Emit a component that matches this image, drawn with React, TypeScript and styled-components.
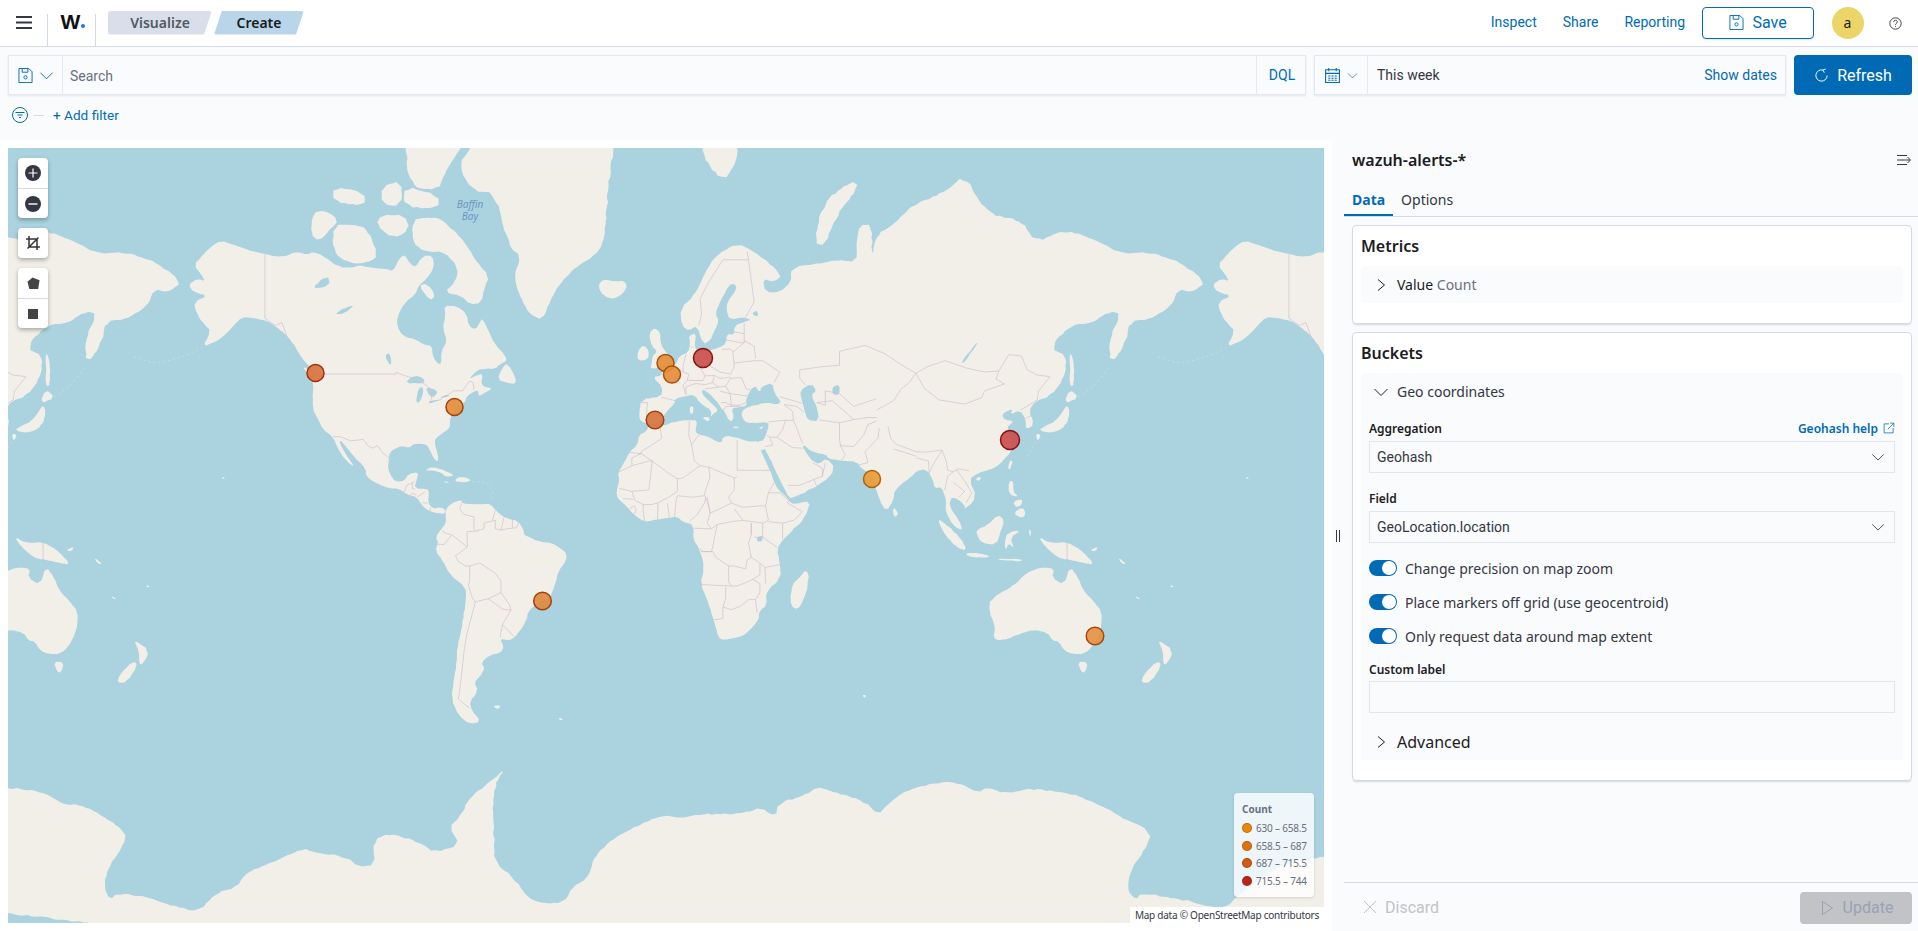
import React from 'react';
import styled, { createGlobalStyle } from 'styled-components';

const BLUE = '#006BB4';
const BORDER = '#D3DAE6';
const PAGE = '#FAFBFD';
const TEXT = '#343741';
const UI = '"Noto Sans", sans-serif';
const PLAIN = 'Roboto, "Liberation Sans", sans-serif';

const GlobalStyle = createGlobalStyle`
  html, body, #root { margin: 0; height: 100%; }
  body { background: #fff; color: ${TEXT}; font-family: ${UI}; font-size: 14px; overflow: hidden; }
  * { box-sizing: border-box; }
`;

/* map data, [lon, lat] */
const LAND: number[][][] = [
  // north america
  [[-168,65.6],[-164.5,66.5],[-162,66.1],[-163.5,67.1],[-166,68.4],[-163,69.5],[-160,70.6],[-156.5,71.3],[-152,70.8],[-146,70.1],[-141,69.7],[-135,69.3],[-130,70],[-126,69.6],[-124,70],[-120,69.4],[-115,68],[-110,68],[-108,68.3],[-104,68],[-98,67.8],[-96,67.5],[-94,69],[-92,69.7],[-90,68.5],[-88,68],[-85.5,69.5],[-82,69.5],[-81.5,68],[-84,66.5],[-87,65.5],[-88,64.2],[-92,62.8],[-94.5,60.5],[-94.5,58.8],[-92.5,57],[-88,56.4],[-85,55.3],[-82.3,55.1],[-82,52.9],[-80,51.2],[-79,51.5],[-79,54],[-77,56],[-78.5,58.7],[-77.5,60.8],[-78,62.4],[-73.5,62.3],[-70,61],[-69.5,59],[-67,58.2],[-65.5,59.5],[-64.5,60.3],[-62,57.5],[-60,55.3],[-57,53.5],[-55.8,52],[-58.5,51.2],[-60,50.2],[-65,50.2],[-67,49.5],[-69.5,47.7],[-65,49.2],[-64.5,48.5],[-65,47],[-64,46],[-61,45.6],[-63.5,44.6],[-66,43.6],[-66,45],[-67,45],[-70,43.7],[-70.8,42],[-74,40.6],[-75.5,38.5],[-76,37],[-76,35],[-78,33.9],[-81,32],[-81.4,30.5],[-80.1,26.8],[-80.2,25],[-80.6,25],[-81.8,26],[-82.8,28],[-84,30],[-86,30.4],[-89,30.3],[-90,29.1],[-93,29.7],[-95,29],[-97.2,27.7],[-97.5,25],[-97.8,22.5],[-96.2,19.3],[-94.5,18.2],[-92,18.6],[-90.5,20.8],[-87,21.5],[-87.6,19],[-88.5,16],[-84,15.8],[-83.3,14.9],[-83.7,11],[-81.8,9],[-79.5,9.6],[-77.5,8.7],[-77.9,7.2],[-80,7.5],[-81.5,7.7],[-83.5,8.4],[-85.7,10],[-87.5,13],[-91,13.9],[-94,16],[-97,15.9],[-101,17.3],[-105.5,20],[-105.5,22.5],[-109,25.7],[-112.5,29.5],[-114.7,31.7],[-114.5,30],[-112,26.5],[-109.5,23],[-112,24.7],[-115,28.2],[-117.1,32.5],[-120.5,34.5],[-122.5,37.8],[-124.3,40.3],[-124,46.3],[-124.7,48.4],[-122.5,48.5],[-125,50.5],[-128,52.5],[-130.3,54.8],[-133,57],[-136.5,58.5],[-140,59.8],[-145,60.3],[-149,60.5],[-152,59],[-154.5,57.5],[-158,56],[-163,54.8],[-160,58],[-162,59],[-165,61],[-166,63],[-161,64],[-166,64.5]],
  // arctic islands
  [[-80,73.7],[-76,72.8],[-71,71.2],[-67,69],[-62,66.8],[-64,65],[-65,62.8],[-69,62.6],[-72,64],[-78,64.5],[-74,66],[-73,68],[-78,70],[-85,70],[-89,71],[-89,73.5],[-85,73.7]],
  [[-117,70],[-112,68.6],[-105,68.6],[-101,69.5],[-105,72.6],[-110,73],[-117,73]],
  [[-125,72],[-122,71.2],[-118,72.5],[-115,73.5],[-120,74.4],[-124,74.2]],
  [[-90,76.5],[-80,76.2],[-78,77.5],[-75,78.5],[-68,80.5],[-62,82],[-70,83],[-80,83],[-90,82],[-92,80]],
  [[-92,74.7],[-80,74.6],[-80,75.8],[-92,76.6]],
  [[-117,75.2],[-106,74.8],[-106,76],[-117,76.5]],
  [[-100,75],[-93,74.8],[-93,77],[-100,76.5]],
  [[-102,73],[-96,71.5],[-90,72.5],[-92,74],[-100,74]],
  [[-87,65.5],[-83,63.2],[-81,64],[-84,65.8]],
  [[-59.3,47.7],[-55.5,46.9],[-53,46.7],[-52.8,48],[-55.7,51.5],[-57.5,50.5]],
  [[-128,50.7],[-125,50],[-123.4,48.4],[-125.5,48.9]],
  [[-85,21.9],[-82,23.2],[-77,21.7],[-74.2,20.2],[-77.7,19.9],[-78.5,21],[-82,22]],
  [[-74.4,18.4],[-73,19.9],[-69.9,19.6],[-68.4,18.6],[-71,18],[-72,18.2]],
  [[-78.3,18.3],[-76.3,18.2],[-77,17.8]],
  // greenland, iceland
  [[-73,78.2],[-68,76.1],[-60,76],[-55,70.5],[-51,69.5],[-53.5,66.8],[-51,63.5],[-48,61],[-43.5,59.9],[-41,63],[-37.5,65.7],[-32,68],[-25,69.5],[-22,71],[-21,74],[-20,77],[-18,80],[-25,83],[-35,83.5],[-50,82.5],[-62,81.5],[-68,79.5]],
  [[-24,65.5],[-22,66.4],[-18,66.1],[-14.5,66.2],[-13.6,65],[-18,63.4],[-22,63.9]],
  // south america
  [[-77.5,8.7],[-75.5,10.8],[-72,12.1],[-71.5,10.8],[-68,10.6],[-64,10.6],[-61.8,10.7],[-60,8.5],[-57,6],[-52,4.8],[-50,1.5],[-50,0],[-48,-1],[-44,-2.6],[-40,-3],[-37,-5],[-35,-6.5],[-35,-9],[-38,-13],[-39,-17.5],[-41,-22],[-44.5,-23],[-48.5,-26],[-49,-29],[-53,-33.8],[-55,-34.9],[-58.5,-34.3],[-57,-36.5],[-58,-38.3],[-62,-39],[-65,-41],[-63.7,-42.5],[-65.3,-44.5],[-67.5,-46],[-66,-48],[-69,-50.5],[-68.3,-52.5],[-65,-54.8],[-69,-55.3],[-73,-53.5],[-75.5,-50],[-74.5,-45],[-73.5,-40],[-73.5,-37],[-71.5,-30],[-70.3,-22],[-70.4,-18.3],[-76,-14],[-78.5,-9],[-81.2,-5.5],[-80,-3],[-81,-1],[-79,2],[-77.3,4],[-77.5,7]],
  // africa
  [[-5.9,35.8],[-1,35.5],[3,36.9],[9.8,37.3],[11,36.9],[10.3,34.3],[11,33.2],[15.3,32.3],[19.5,30.4],[20,32.5],[23,32.7],[29,31],[32.5,31.2],[32.5,30],[34,27],[35.5,24],[37,21],[38,18],[39.5,15.5],[43,12.5],[43.3,11.5],[45,10.5],[51,11.9],[49,6],[45,2],[41,-2],[39,-5],[40,-10.5],[40.5,-15],[35,-20],[35.5,-24],[32.8,-26],[32.5,-29],[28,-33],[25.5,-34],[20,-34.8],[18.4,-34],[17,-29.5],[14.5,-22.5],[12,-17],[13.5,-12],[12.2,-6],[9.5,-1.5],[9.7,3.5],[6,4.3],[4,6.3],[1,5.9],[-4,5.1],[-7.6,4.4],[-11,6.7],[-13.2,9],[-15,11],[-17,12.5],[-17.5,14.7],[-16.3,19],[-17,21],[-15,24],[-13,27.7],[-10,30],[-9.5,33],[-7,34]],
  [[49.3,-12],[50.5,-15.5],[47.5,-24.5],[45,-25.5],[43.5,-22.5],[44.5,-17],[46.5,-15.5]],
  // eurasia
  [[-5.6,36],[-9,37],[-9.5,38.8],[-8.8,43],[-1.7,43.4],[-1.2,46],[-4.7,48.3],[-1.5,48.7],[-1.5,49.7],[1.5,50.1],[3.5,51.3],[4.7,53],[8,53.8],[8.5,56],[8,57],[10.6,57.7],[10,55],[11,54],[14,54],[18.5,54.7],[21,55.5],[21.5,57.5],[24,57.2],[24,59],[28,59.7],[30,60],[27,60.5],[22.5,60],[21.3,61.5],[21.5,63],[25,65],[24,65.8],[22,65.5],[19,63],[17.3,61],[18.7,59.8],[16.5,57.5],[15.7,56.2],[13,55.4],[11,59],[8,58],[5.5,59],[5,62],[10,64],[14,67.5],[18,69.7],[25,71],[31,70],[41,67],[38,66],[34,66.5],[35,64.5],[40,64.5],[44,66],[44,68],[54,68.5],[60,69],[67,68.7],[67,71],[68,73],[72.5,73],[72.5,69],[74,72],[80,73],[87,75],[98,76],[105,77.5],[113,74],[125,73.5],[130,71],[140,72.5],[150,71.5],[160,69.7],[170,70],[178,69],[180,68.8],[190,66],[185,64.5],[180,65],[178,62.5],[170,60],[163,59.8],[162,56],[156,51],[156,57],[160,61],[156,61.5],[150,59.5],[142,59],[135,54.7],[141,53],[140,48],[135,43.5],[130,42.5],[127.5,39.8],[129.5,36],[126.5,34.5],[126.5,37.5],[124.5,40],[121,38.8],[122,40.5],[118,39],[119,37.3],[122.5,37],[119.5,35],[122,31],[121.5,28],[117,23.5],[113,22],[109.5,21],[106.5,19],[109.3,13],[105,8.7],[105,10.5],[100.5,13.5],[99.5,10],[103.5,4],[104.2,1.4],[101,3],[98.3,8],[98.5,12],[97,16.5],[94.5,16],[94,18.5],[91.5,22.5],[88,21.7],[86.5,20],[80.3,15.5],[80,12],[77.5,8],[75,12],[73,19],[72.6,21],[69,22.3],[67,24.8],[61.5,25.2],[57,25.7],[56.5,27],[51,28],[48.5,30],[48,29.5],[50,26.7],[51.5,25],[54,24],[56.3,26],[59.7,22.5],[55,17.5],[45,13],[43.3,12.7],[41,17],[39,21],[35.5,27.5],[34.6,29],[33.5,28],[32.5,30],[32.5,31.2],[34.3,31.3],[36,35],[36,36.8],[30,36.3],[27.3,37],[26.3,39.5],[29,41],[35,42],[41,41.5],[38,44.5],[37.5,47],[33.5,46],[33,44.5],[31,46.5],[28,43],[28.5,41.2],[26,40.8],[23,40.5],[24,38],[22.5,36.5],[19.5,41],[13.5,45.5],[12.3,44.5],[16,41.8],[18.5,40],[16.5,39],[15.7,38],[16,40],[12,41.8],[10,44],[7,43.7],[3.2,43],[3,41.7],[0,39.5],[-2,36.8]],
  // europe islands
  [[-5.5,50],[1.4,51.2],[1.7,52.7],[-1,54.5],[-2,56],[-2,57.7],[-4,58.6],[-6,57.5],[-5,55],[-3,54],[-4.7,53],[-5,51.6]],
  [[-10,52],[-6.3,52.2],[-6,54.2],[-8,55.3],[-10,54]],
  [[12,79],[20,76.8],[25,78.5],[25,80],[15,80]],
  [[52,71],[56,70.7],[60,74],[68,76.5],[65,77],[55,75]],
  [[12.5,38],[15.5,38.2],[15,36.7]],
  [[8.3,41],[9.7,41],[9.5,39],[8.5,39]],
  [[23.5,35.5],[26.2,35.2],[24,34.9]],
  [[32.5,35],[34.5,35.6],[33.5,34.7]],
  // east asia and pacific
  [[142,54],[143.3,52],[143.5,46.5],[142,46],[142,50]],
  [[140,41.6],[145.3,43.3],[141.8,45.4]],
  [[131,34.3],[136,33.5],[140.8,35.7],[142,39.5],[141,41.4],[139.8,40],[137,37],[133,35.5]],
  [[130,33.5],[131.9,33],[130.6,31]],
  [[121,25.2],[122,25],[120.8,22],[120.2,23]],
  [[108.7,19.3],[111,20],[110,18.3]],
  [[80,9.7],[81.8,7.3],[80.5,6],[79.8,7.5]],
  [[120.5,18.5],[122.2,18.4],[122,15],[124,13],[120.5,14]],
  [[122,7.5],[125.5,9.7],[126.5,7],[125,5.7]],
  [[122,11.5],[125.3,12.5],[125,10.2],[123,9.5]],
  [[109,1.5],[113,3.2],[116.7,7],[119,5],[117.7,1],[116,-3.7],[111,-3],[109.5,-0.5]],
  [[95.3,5.6],[98,4],[103.5,-1],[106,-5.8],[102,-4.5],[98,0]],
  [[105.3,-6.5],[110,-6.5],[114.5,-7.8],[110,-8.2],[106,-7.5]],
  [[116,-8.5],[125,-8.5],[125,-9.5],[118,-9]],
  [[119.5,-5.5],[119,-3],[120,0.7],[125,1.5],[121,-1],[122.5,-5],[120.5,-3]],
  [[127.5,2],[128.5,1],[128,-1]],
  [[131,-0.8],[135,-3],[141,-2.6],[146,-5.5],[150.8,-10.5],[147,-10],[143,-9],[138,-8.3],[133,-4]],
  [[149,-5.5],[152,-4.2],[151,-6]],
  [[159,-8],[162,-10.5],[160,-10]],
  [[165,-21],[167,-22.3],[165.5,-21.9]],
  [[177.3,-17.5],[178.7,-18],[177.5,-18.3]],
  // australia, new zealand
  [[114,-22],[122,-18],[126,-14],[130,-12],[133,-11.5],[136.5,-12],[135.7,-15],[140,-17.5],[142,-11],[145,-15],[146.5,-19],[150,-22.5],[153.2,-26],[153,-31],[150.5,-36],[147,-38.7],[143,-38.7],[140,-37.8],[138,-35],[136,-35],[134,-32.5],[129,-31.7],[124,-33],[118,-35],[115,-34.3],[115.8,-31],[113.5,-26]],
  [[144.7,-40.7],[148.3,-40.9],[147.5,-43.5],[146,-43.5]],
  [[172.7,-34.5],[178.5,-37.7],[176,-41.5],[174.8,-41.3],[174.8,-38]],
  [[172.7,-40.5],[174.3,-41.7],[170.5,-46],[167,-46.2],[168,-44]],
  [[-61,-51.5],[-58,-51.3],[-59,-52.3]],
  [[-38,-54],[-36,-54.2],[-37,-54.6]],
  [[69,-49],[70.5,-49],[69.8,-49.8]],
  [[-156,20],[-155,19.5],[-155.8,19]],
];

const WATER: number[][][] = [
  [[47,45],[51,46.8],[53,45],[51,44],[53,41],[53.8,37],[50,37.2],[49,39],[47.8,42.5]],
  [[58.5,46],[61,46.6],[61,44],[58.5,44]],
  [[-125,65],[-119,67],[-118,65.5]],
  [[-117,61],[-109,62.8],[-113,61]],
  [[-99,53],[-96.5,50.5],[-97,53.8]],
  [[-92,46.8],[-85,46.8],[-85,48],[-88.5,48.8]],
  [[-88,42],[-86.5,42],[-85,45.8],[-87,45.8]],
  [[-84.5,46],[-80,45],[-81.7,43.3],[-83.5,44]],
  [[-83.5,41.6],[-79,42.8],[-83,42.5]],
  [[-79.8,43.3],[-76.3,43.5],[-76.5,44.2]],
  [[32,-1],[34,-0.3],[33.8,-2.5],[32,-2.5]],
  [[30,61],[32.5,60.5],[32,61.7]],
  [[103.7,51.7],[105,51.6],[109.7,55.7],[109,55.6]],
];

// island chains, drawn as faint dashes
const CHAINS: number[][][] = [
  [[-163,54.8],[-168,53.3],[-175,52],[-180,51.5],[-187,52.8]],
  [[145,43.5],[150,46],[156,50.5]],
  [[-68,18.3],[-63,18],[-61,15],[-61.5,12]],
  [[127,26.5],[130,31]],
];

const BORDERS: number[][][] = [
  [[-123,49],[-95,49],[-95,49.4],[-89,48],[-84.5,46.5],[-82.5,45.3],[-82.4,43],[-83,42],[-79,42.8],[-79,43.3],[-76.5,44],[-74.7,45],[-71.5,45],[-70,46.5],[-69,47.4],[-67.8,47],[-67.5,45.2]],
  [[-141,69.7],[-141,60.3],[-137.5,59],[-135,59.5],[-133,56.5],[-130.3,55]],
  [[-117.1,32.5],[-114.7,32.5],[-111,31.3],[-108,31.5],[-106.5,31.7],[-104.5,29.5],[-103,29],[-101.5,29.8],[-99.5,27.5],[-97.2,25.9]],
  [[-92.2,14.5],[-91,17.2],[-89.2,17.8],[-88.3,18.5]],[[-89.2,17.8],[-89.2,15.9],[-88.3,15.7]],[[-90,13.7],[-89.2,14.4],[-87.7,13.8]],[[-87.5,13],[-84.5,15]],[[-85.7,11.1],[-83.7,11]],[[-83,8.3],[-82.7,9.5]],
  [[-71.5,11.8],[-72.5,9],[-71,7],[-67.5,6.2],[-67.5,2],[-66.9,1.2]],
  [[-51.7,4.2],[-52.5,2.4],[-56,2],[-58,1.5],[-60,2],[-60,5],[-64,4],[-64,2],[-67,1.2],[-70,1],[-69.8,-4.3],[-74,-7.5],[-73,-9.5],[-70.5,-11],[-69,-11],[-65.5,-10],[-60,-13.5],[-58,-16.2],[-58,-20],[-55,-24],[-54.5,-25.7],[-57.5,-30.2],[-53.5,-33.7]],
  [[-57,6],[-58,1.5]],[[-54,5.7],[-54,2.3]],[[-60,8.5],[-61,5]],
  [[-80.3,-3.4],[-78,-3.5],[-75.3,-0.1],[-77.5,0.5],[-78.8,1.4]],[[-75.3,-0.1],[-70,-4.3]],
  [[-69,-11],[-69,-16],[-69.5,-17.5]],[[-69.5,-17.5],[-68,-22],[-67,-23]],[[-58,-20],[-62.5,-22]],[[-67,-23],[-62.5,-22]],[[-62.5,-22],[-57.6,-25.3],[-54.5,-25.7]],[[-67,-23],[-70,-33],[-71,-38],[-72,-45],[-73,-50],[-69,-52]],[[-57.5,-30.2],[-58.4,-34]],
  // africa
  [[-2,35],[-1.5,32],[-5,30],[-8.7,28],[-8.7,27.3],[-13,27.7]],[[-8.7,27.3],[-12,26],[-12,23.5],[-17,21.3]],[[-12,23.5],[-6,25],[-4.8,25],[-6,15.5],[-12,15],[-16.5,16]],[[-8.7,27.3],[-4.8,25],[1,21],[4,19.2],[6,19.5],[12,23.5]],[[9,30],[10,25],[12,23.5]],[[8.2,37],[8,33],[9,30],[11.5,33]],[[25,31.5],[25,22]],[[25,22],[36.9,22]],[[12,23.5],[15,23],[24,19.5],[25,20]],[[15,23],[15.5,20],[13.5,14],[15,10],[15.5,7.5],[19,9],[23,11],[22,13],[24,15.5],[24,19.5]],[[24,9],[27,5],[34,4],[36,5],[35,10],[36,14.5],[38,18]],[[23,11],[27,9.5],[33,10],[35,10]],[[36,14.5],[40,14.5],[43,12],[42.7,11],[48,8],[45,5],[41,4],[36,4.5]],[[41,4],[41,-1.7]],[[34,-1],[37.7,-3.5],[39.2,-4.7]],[[31,-1],[34,-1],[34,4]],[[30,4],[30,0]],[[-12,15],[-11,12],[-8,10.5],[-5,10.5],[-3,11],[1,13],[4,15],[4,19.2]],[[3.5,11.7],[4,13.5],[9,13],[13.5,13.5]],[[8.5,4.8],[11,7],[13.5,11],[14,13]],[[3,6.3],[3.5,11.7]],[[1.2,6],[0.5,11]],[[-3,5.1],[-2.8,11]],[[-7.5,4.4],[-8,8],[-8,10.5]],[[-11.3,7],[-10.5,8.5],[-11,10]],[[-15,12.5],[-11.5,12.3]],[[-13,9],[-11,10]],[[14.5,13],[15.5,7.5],[14.5,4],[16,2]],[[9.7,2.2],[16,2],[18,3.5],[23,4.5],[27,5]],[[12,-5],[13,-6],[16,-6],[16.5,-4],[18,3.5]],[[12.2,-6],[16.5,-6],[17.5,-8],[22,-11],[24,-11],[28,-12],[28.5,-9],[30,-8],[29,-3],[30,0],[30,4]],[[11.8,-17.3],[23,-17.8],[25,-17.8]],[[22,-11],[22,-13],[22,-16.5],[23,-17.8]],[[25,-17.8],[28.5,-16.5],[30.5,-15.6],[33,-14],[33,-10],[30,-8]],[[21,-18.3],[21,-22],[20,-24.7],[20,-28.3],[17,-28.7]],[[20,-24.7],[23,-25.5],[26,-24.5],[29.3,-22.2]],[[29.3,-22.2],[31.5,-22.3],[33,-20],[33,-17],[30.5,-15.6]],[[31.5,-22.3],[32,-26.5]],[[34.8,-11.5],[40.5,-10.5]],[[33,-10],[34.8,-11.5],[35,-17]],
  // europe
  [[-1.7,43.4],[3.2,42.5]],[[-8.8,42],[-6.5,42],[-7,37.2]],[[2.5,51],[6,49.5],[8,49],[7.5,47.6],[6,46.3],[7,44]],[[7,53.3],[6,51],[6,49.5]],[[8.7,54.9],[9.7,54.8]],[[14.2,53.9],[15,51],[12.2,50.3],[13.7,48.6],[13,47.5],[10,47.5],[7.5,47.6]],[[7,44],[7,46],[10.5,46.8],[13.7,46.5]],[[13.7,48.6],[17,48.7],[16.3,47],[13.7,46.5]],[[15,51],[19,49.5],[22.7,49],[24,50.7],[23.5,54],[22.7,54.4],[19.7,54.4]],[[17,48.7],[19,48],[22.7,48.3]],[[16.3,47],[18.7,45.9],[21,46.2],[22.7,48]],[[22.7,48],[26.5,48.2],[28.2,45.5],[29.7,45.2]],[[21,46.2],[22.5,44.3],[28.5,43.7]],[[13.7,45.5],[18.7,45.9]],[[19,44.9],[22.5,44.3]],[[22.5,44.3],[23,41.3],[26.3,41.4],[28,42]],[[19.3,42],[21,42],[23,41.3]],[[20,39.7],[21,41],[26.3,41]],[[40,49.5],[34,52],[31,52],[24,51.5]],[[38,47],[40,49.5]],[[23.5,53.8],[28,56],[31,55],[31.5,52.5]],[[21,56.3],[26.5,55.7],[28,56]],[[24,57.8],[27.5,57.5]],[[27.5,59.4],[27.5,56]],[[28,60.5],[31,63],[29,69],[28.5,70]],[[11.5,59],[12.5,61],[12,63.5],[15,66],[20,69],[25,69],[29,69]],
  // middle east and asia
  [[36,36.8],[42,37.2],[44.8,37.2]],[[41.5,41.5],[44.5,39.7],[44.8,37.2]],[[44.8,37.2],[46,35],[48,30.4]],[[42,37.2],[41,34.5],[39,32.3],[36.5,32.3],[35.5,33]],[[39,32.3],[44.5,29.2],[48,29]],[[43,17],[47,17],[52,19],[55,20],[55,22.7],[51.5,24.5]],[[52,19],[53,16.7]],[[55,20],[56,24.5]],[[36.5,32.3],[37.5,30],[35,29.5]],[[61,36.5],[61,31.5],[61.5,29.5],[63,27],[61.7,25.2]],[[61,29.8],[66,29.5],[69.5,33],[71,36],[74,37]],[[68,23.8],[71,24.5],[70,28],[74.5,32],[75,35]],[[78,35.5],[79,32],[81,30.2],[88,27.9],[92,27.8],[97,28.5]],[[80,28.8],[88,26.5]],[[88,26],[92.3,25],[92.5,21]],[[97,28.3],[94,24],[92.5,21]],[[97,28.5],[98.5,25],[99,22],[101,21.5]],[[101,21.5],[103,22.5],[106.6,21.8]],[[102,22.4],[105,18.5],[107.5,14.5],[105.5,11]],[[98,15.5],[99,20],[101,21.5]],[[101,18],[105,15],[103,13]],[[124.5,40],[128,41.5],[130.5,42.7]],[[126.5,37.8],[128.5,38.5]],[[130.5,42.7],[131,45],[135,48.4],[130.5,48.8],[127,50],[125,53],[120.5,53.3],[117,49.7]],[[117,49.7],[112,49.5],[106,50.3],[98,52],[92,50.7],[87.8,49.2],[91,45.5],[96,42.7],[105,41.6],[111,43.3],[112,45],[119,46.7],[116,47.8],[117,49.7]],[[87.8,49.2],[85.5,47],[82.5,45.3],[80,42.5],[74,40]],[[87.8,49.2],[83,51],[77,53.5],[70,55.2],[61,54],[61,51],[55,50.7],[47,50],[47,48],[49,46.5]],[[53,42],[56,41.3],[56,45],[61,44.3],[66,41],[70,42],[74,43]],[[53,42],[58.5,42.5],[66,37.4]],[[54,37.3],[61,36.5],[66,37.4],[71,38],[74,38]],[[40,43.5],[48,41.8]],[[41.5,41.5],[46,41],[48.5,39.5]],
  [[141,-2.6],[141,-9]],
];

// antarctic coast, traced in page pixels
const ANTARCTICA: number[][] = [[-20,790],[13,788],[43,792],[65,805],[78,804],[98,813],[126,832],[124,845],[108,867],[104,887],[110,900],[117,893],[147,897],[173,906],[199,912],[217,892],[236,888],[247,872],[277,860],[304,848],[312,852],[347,857],[358,867],[375,865],[373,840],[390,833],[421,843],[434,853],[460,845],[449,827],[460,817],[470,797],[490,782],[506,768],[493,787],[494,837],[494,862],[516,880],[527,897],[540,903],[564,903],[572,887],[588,878],[594,857],[611,840],[633,828],[663,815],[680,818],[706,814],[747,813],[760,807],[776,817],[778,803],[806,795],[817,787],[828,790],[865,801],[878,815],[887,805],[905,791],[937,782],[960,783],[978,793],[987,787],[1005,794],[1032,788],[1073,794],[1100,805],[1123,818],[1152,832],[1145,850],[1132,867],[1127,890],[1136,900],[1141,893],[1186,900],[1209,907],[1227,907],[1236,897],[1272,870],[1299,860],[1350,855],[1350,950],[-20,950]];

const project = ([lon, lat]: number[]) => {
  const y = Math.log(Math.tan(Math.PI / 4 + (lat * Math.PI) / 360));
  return [666 + lon * 2.8444, 534.5 - y * 163];
};

// one corner-cutting pass, so the coast doesn't look like straight ruler lines
const cutCorners = (pts: number[][]) =>
  pts.flatMap((p, i) => {
    const q = pts[(i + 1) % pts.length];
    return [
      [p[0] * 0.75 + q[0] * 0.25, p[1] * 0.75 + q[1] * 0.25],
      [p[0] * 0.25 + q[0] * 0.75, p[1] * 0.25 + q[1] * 0.75],
    ];
  });

let seed = 7;
const jitter = () => {
  seed = (seed * 16807) % 2147483647;
  return (seed / 2147483647) * 2 - 1;
};

// breaks long edges up with a small fixed wobble, like a real coastline at this zoom
const roughen = (pts: number[][]) =>
  pts.flatMap((p, i) => {
    const q = pts[(i + 1) % pts.length];
    const dx = q[0] - p[0];
    const dy = q[1] - p[1];
    const len = Math.hypot(dx, dy);
    const steps = Math.max(1, Math.round(len / 4));
    const out: number[][] = [p];
    for (let j = 1; j < steps; j += 1) {
      const t = j / steps;
      const off = jitter() * Math.min(1, len * 0.05);
      out.push([p[0] + dx * t - (dy / len) * off, p[1] + dy * t + (dx / len) * off]);
    }
    return out;
  });

const line = (pts: number[][]) => `M${pts.map((p) => `${p[0].toFixed(1)} ${p[1].toFixed(1)}`).join('L')}`;
const coast = (pts: number[][]) => `${line(roughen(cutCorners(pts)))}Z`;

const LAND_PATH = LAND.map((r) => coast(r.map(project))).join('');
const WATER_PATH = WATER.map((r) => coast(r.map(project))).join('');
const BORDER_PATH = BORDERS.map((r) => line(r.map(project))).join('');
const CHAIN_PATH = CHAINS.map((r) => line(r.map(project))).join('');
const ANTARCTIC_PATH = coast(ANTARCTICA);

const MARKERS = [
  { x: 315.5, y: 373, r: 8.5, fill: '#d9743f', line: '#a3300c' },
  { x: 454.5, y: 407, r: 8.5, fill: '#e58e3a', line: '#a8400a' },
  { x: 665.5, y: 363, r: 8.5, fill: '#e58e3a', line: '#a8500a' },
  { x: 672, y: 374.5, r: 8.5, fill: '#e58e3a', line: '#a8500a' },
  { x: 703, y: 358, r: 9.5, fill: '#c9504c', line: '#8e0f10' },
  { x: 655, y: 420, r: 8.8, fill: '#d9743f', line: '#a3400c' },
  { x: 1010, y: 440, r: 9.5, fill: '#c9504c', line: '#8e0f10' },
  { x: 872, y: 479, r: 8.5, fill: '#ea9c35', line: '#ad620b' },
  { x: 542.5, y: 601, r: 8.8, fill: '#e08a40', line: '#a3400c' },
  { x: 1095, y: 636, r: 8.8, fill: '#e59244', line: '#a8450c' },
];

const RANGES = [
  { label: '630 – 658.5', color: '#e8890c' },
  { label: '658.5 – 687', color: '#de7410' },
  { label: '687 – 715.5', color: '#d05a16' },
  { label: '715.5 – 744', color: '#b92419' },
];

const Page = styled.div`
  height: 100vh;
  display: flex;
  flex-direction: column;
`;

const Header = styled.header`
  height: 47px;
  flex: none;
  display: flex;
  align-items: stretch;
  background: #fff;
  border-bottom: 1px solid ${BORDER};
`;

const HeaderCell = styled.div<{ $w: number; $line?: boolean }>`
  width: ${(p) => p.$w}px;
  flex: none;
  display: flex;
  align-items: center;
  justify-content: center;
  position: relative;
  ${(p) =>
    p.$line &&
    `&::after { content: ''; position: absolute; right: 0; top: 14px; bottom: 0; width: 1px; background: ${BORDER}; }`}
`;

const Logo = styled.span`
  display: flex;
  align-items: flex-end;
  gap: 1px;
  font-family: "Liberation Sans", sans-serif;
  font-weight: 700;
  font-size: 21px;
  line-height: 15px;
  color: #111;
  margin: -3px 0 0 2px;
  i { width: 4px; height: 4px; margin-bottom: 1px; border-radius: 50%; background: #0a7cff; }
`;

const Crumbs = styled.nav`
  display: flex;
  align-items: center;
  margin-left: 12px;
  gap: 2px;
  padding-bottom: 1px;
`;

const Crumb = styled.span<{ $active?: boolean }>`
  height: 24px;
  width: ${(p) => (p.$active ? 90 : 104)}px;
  display: flex;
  align-items: center;
  justify-content: center;
  font-size: 14px;
  font-weight: 600;
  color: ${(p) => (p.$active ? '#1a1c21' : '#535966')};
  background: ${(p) => (p.$active ? '#b9d5ea' : '#d9dfea')};
  border-radius: 3px;
  clip-path: ${(p) =>
    p.$active
      ? 'polygon(8px 0, 100% 0, calc(100% - 8px) 100%, 0 100%)'
      : 'polygon(0 0, 100% 0, calc(100% - 8px) 100%, 0 100%)'};
`;

const HeaderRight = styled.div`
  margin-left: auto;
  display: flex;
  align-items: center;
`;

const NavLink = styled.a`
  font-family: ${PLAIN};
  font-size: 14px;
  color: ${BLUE};
  margin-right: 26px;
  padding-bottom: 3px;
`;

const SaveButton = styled.button`
  width: 112px;
  height: 32px;
  margin: 0 8px 1px -9px;
  display: flex;
  align-items: center;
  justify-content: center;
  gap: 8px;
  font-family: ${PLAIN};
  font-size: 16px;
  color: ${BLUE};
  background: #fff;
  border: 1px solid ${BLUE};
  border-radius: 4px;
  box-shadow: 0 2px 2px -1px rgba(152, 162, 179, 0.3);
`;

const Avatar = styled.span`
  width: 32px;
  height: 32px;
  border-radius: 50%;
  background: #ecd568;
  color: #1a1c21;
  display: flex;
  align-items: center;
  justify-content: center;
  font-size: 14px;
  margin-bottom: 1px;
`;

const Query = styled.section`
  height: 93px;
  flex: none;
  background: ${PAGE};
  padding: 8px 6px 0 8px;
`;

const QueryRow = styled.div`
  display: flex;
  height: 40px;
  gap: 8px;
`;

const Field = styled.div<{ $w?: number }>`
  ${(p) => (p.$w ? `width: ${p.$w}px; flex: none;` : 'flex: 1;')}
  display: flex;
  align-items: stretch;
  background: ${PAGE};
  border: 1px solid #e4e8ef;
  box-shadow: 0 1px 2px rgba(152, 162, 179, 0.25);
`;

const Prepend = styled.div<{ $w: number }>`
  width: ${(p) => p.$w}px;
  flex: none;
  display: flex;
  align-items: center;
  justify-content: center;
  gap: 6px;
  border-right: 1px solid #e4e8ef;
`;

const SearchText = styled.span`
  flex: 1;
  display: flex;
  align-items: center;
  padding: 1px 0 0 7px;
  font-family: ${PLAIN};
  font-size: 14px;
  color: #69707d;
`;

const Dql = styled.span`
  width: 49px;
  padding-left: 2px;
  border-left: 1px solid #e4e8ef;
  display: flex;
  align-items: center;
  justify-content: center;
  font-family: ${PLAIN};
  font-size: 14px;
  color: ${BLUE};
`;

const DateText = styled.span`
  flex: 1;
  display: flex;
  align-items: center;
  justify-content: space-between;
  padding: 0 8px 0 9px;
  font-family: ${PLAIN};
  font-size: 14px;
  color: ${TEXT};
  em { font-style: normal; color: ${BLUE}; }
`;

const RefreshButton = styled.button`
  width: 118px;
  flex: none;
  display: flex;
  align-items: center;
  justify-content: center;
  gap: 8px;
  font-family: ${PLAIN};
  font-size: 16px;
  color: #fff;
  background: ${BLUE};
  border: none;
  border-radius: 4px;
`;

const FilterRow = styled.div`
  display: flex;
  align-items: center;
  height: 24px;
  margin-top: 8px;
  padding-left: 4px;
  font-family: ${PLAIN};
  font-size: 13.6px;
  color: ${BLUE};
`;

const Dash = styled.span`
  width: 10px;
  height: 1px;
  background: ${BORDER};
  margin: 0 9px 0 6px;
`;

const Content = styled.main`
  flex: 1;
  min-height: 0;
  display: flex;
`;

const MapColumn = styled.div`
  width: 1332px;
  flex: none;
  padding: 8px;
  display: flex;
`;

const MapFrame = styled.div`
  flex: 1;
  position: relative;
  overflow: hidden;
  background: #aad3df;
`;

const MapSvg = styled.svg`
  display: block;
  width: 100%;
  height: 100%;
`;

const Controls = styled.div`
  position: absolute;
  left: 10px;
  top: 10px;
  display: flex;
  flex-direction: column;
  gap: 10px;
`;

const ControlGroup = styled.div`
  width: 30px;
  background: #fff;
  border-radius: 4px;
  box-shadow: 0 2px 4px rgba(0, 0, 0, 0.3);
  display: flex;
  flex-direction: column;
`;

const ControlButton = styled.div`
  height: 30px;
  display: flex;
  align-items: center;
  justify-content: center;
  & + & { border-top: 1px solid ${BORDER}; }
`;

const Legend = styled.div`
  position: absolute;
  right: 10px;
  bottom: 26px;
  width: 80px;
  height: 104px;
  padding: 9px 8px;
  background: rgba(255, 255, 255, 0.8);
  border-radius: 4px;
  box-shadow: 0 1px 3px rgba(0, 0, 0, 0.12);
  font-size: 10px;
  color: #69707d;
`;

const LegendTitle = styled.div`
  font-weight: 700;
  font-size: 10px;
  line-height: 14px;
  margin-bottom: 3px;
`;

const LegendRow = styled.div`
  display: flex;
  align-items: center;
  gap: 4px;
  height: 17.7px;
  white-space: nowrap;
  font-size: 10px;
  letter-spacing: -0.2px;
`;

const LegendDot = styled.i<{ $color: string }>`
  width: 10px;
  height: 10px;
  flex: none;
  border-radius: 50%;
  background: ${(p) => p.$color};
  border: 1px solid rgba(120, 40, 0, 0.35);
`;

const Attribution = styled.div`
  position: absolute;
  right: 0;
  bottom: 0;
  height: 16px;
  padding: 0 5px;
  background: #fff;
  font-size: 10px;
  letter-spacing: -0.25px;
  line-height: 16px;
  color: ${TEXT};
  white-space: nowrap;
`;

const Panel = styled.aside`
  flex: 1;
  min-width: 0;
  position: relative;
  display: flex;
  flex-direction: column;
  background: ${PAGE};
`;

const Handle = styled.span`
  position: absolute;
  left: 4px;
  top: 390px;
  width: 4px;
  height: 12px;
  border-left: 1px solid ${TEXT};
  border-right: 1px solid ${TEXT};
`;

const PanelTitle = styled.div`
  display: flex;
  align-items: center;
  justify-content: space-between;
  height: 40px;
  padding: 0 6px 0 20px;
  font-size: 16px;
  font-weight: 600;
  color: #1a1c21;
`;

const Tabs = styled.div`
  display: flex;
  height: 37px;
  margin: 0 0 0 12px;
  padding-top: 3px;
  border-bottom: 1px solid ${BORDER};
`;

const Tab = styled.span<{ $active?: boolean }>`
  padding: 0 8px;
  height: 33px;
  display: flex;
  align-items: center;
  font-size: 14px;
  font-weight: ${(p) => (p.$active ? 700 : 400)};
  color: ${(p) => (p.$active ? BLUE : TEXT)};
  box-shadow: ${(p) => (p.$active ? `inset 0 -2px 0 ${BLUE}` : 'none')};
`;

const PanelBody = styled.div`
  flex: 1;
  min-height: 0;
  padding: 8px 6px 0 20px;
  display: flex;
  flex-direction: column;
  gap: 8px;
`;

const Card = styled.section`
  background: #fff;
  border: 1px solid ${BORDER};
  border-radius: 4px;
  box-shadow: 0 2px 2px -1px rgba(152, 162, 179, 0.4);
  padding: 8px 8px 20px;
`;

const CardTitle = styled.h3`
  margin: 0 0 8px;
  height: 24px;
  line-height: 24px;
  font-size: 16px;
  font-weight: 600;
  color: #1a1c21;
`;

const Group = styled.div`
  background: ${PAGE};
  border-radius: 4px;
`;

const GroupHead = styled.div<{ $big?: boolean }>`
  height: 37px;
  display: flex;
  align-items: center;
  gap: 8px;
  padding-left: 12px;
  font-size: ${(p) => (p.$big ? 16 : 14)}px;
  color: ${(p) => (p.$big ? '#1a1c21' : TEXT)};
  span { color: #69707d; }
  b { font-weight: 400; color: #1a1c21; }
`;

const Form = styled.div`
  padding: 9px 8px 10px;
`;

const LabelRow = styled.div<{ $mb?: number }>`
  display: flex;
  justify-content: space-between;
  align-items: center;
  height: 18px;
  margin-bottom: ${(p) => p.$mb ?? 4}px;
  font-size: 12px;
  font-weight: 600;
  color: #1a1c21;
  a { color: ${BLUE}; display: flex; align-items: center; gap: 5px; }
`;

const Select = styled.div<{ $mb?: number }>`
  height: 32px;
  padding: 0 9px 0 7px;
  margin-bottom: ${(p) => p.$mb ?? 0}px;
  display: flex;
  align-items: center;
  justify-content: space-between;
  background: ${PAGE};
  border: 1px solid #e1e5ec;
  font-family: ${PLAIN};
  font-size: 14px;
  color: ${TEXT};
`;

const SwitchRow = styled.div<{ $mb?: number }>`
  height: 16px;
  margin-bottom: ${(p) => p.$mb ?? 18}px;
  display: flex;
  align-items: center;
  gap: 8px;
  font-size: 14px;
  color: ${TEXT};
`;

const Switch = styled.span`
  width: 28px;
  height: 16px;
  flex: none;
  position: relative;
  border-radius: 8px;
  background: ${BLUE};
  &::after {
    content: '';
    position: absolute;
    right: 1px;
    top: 1px;
    width: 14px;
    height: 14px;
    border-radius: 50%;
    background: #fff;
  }
`;

const Footer = styled.footer`
  height: 49px;
  flex: none;
  margin-left: 12px;
  padding: 0 6px 0 18px;
  border-top: 1px solid ${BORDER};
  display: flex;
  align-items: center;
  justify-content: space-between;
`;

const Discard = styled.span`
  display: flex;
  align-items: center;
  gap: 7px;
  font-family: ${PLAIN};
  font-size: 16px;
  color: #c2c3c6;
`;

const UpdateButton = styled.button`
  width: 112px;
  height: 32px;
  margin-top: 1px;
  display: flex;
  align-items: center;
  justify-content: center;
  gap: 8px;
  font-family: ${PLAIN};
  font-size: 16px;
  color: #98a2b3;
  background: #c2c3c6;
  border: none;
  border-radius: 4px;
`;

const Ico = ({ size = 16, color = 'currentColor', children }: { size?: number; color?: string; children: React.ReactNode }) => (
  <svg width={size} height={size} viewBox="0 0 16 16" fill="none" stroke={color} strokeWidth={1}>
    {children}
  </svg>
);

const ChevronDown = ({ color = TEXT, size = 14 }: { color?: string; size?: number }) => (
  <Ico size={size} color={color}><path d="M1.5 5 8 11.5 14.5 5" /></Ico>
);
const ChevronRight = () => (
  <Ico size={16} color="#1a1c21"><path d="M5 2.5 11.5 8 5 13.5" /></Ico>
);
const SaveIcon = ({ color = BLUE }: { color?: string }) => (
  <Ico size={15} color={color}>
    <path d="M1 .5h10.5l3.500 3.500v11.500H1zM4.500 .5v4h6v-4" />
    <circle cx="8" cy="10" r="1.7" />
  </Ico>
);

const App = () => (
  <Page>
    <GlobalStyle />
    <Header>
      <HeaderCell $w={48} $line>
        <svg width="16" height="14" viewBox="0 0 16 14" fill="#343741">
          <rect y="0" width="16" height="2" />
          <rect y="5.5" width="16" height="2" />
          <rect y="11" width="16" height="2" />
        </svg>
      </HeaderCell>
      <HeaderCell $w={48} $line>
        <Logo>W<i /></Logo>
      </HeaderCell>
      <Crumbs>
        <Crumb>Visualize</Crumb>
        <Crumb $active>Create</Crumb>
      </Crumbs>
      <HeaderRight>
        <NavLink>Inspect</NavLink>
        <NavLink>Share</NavLink>
        <NavLink>Reporting</NavLink>
        <SaveButton><SaveIcon />Save</SaveButton>
        <HeaderCell $w={1} $line />
        <HeaderCell $w={49}><Avatar>a</Avatar></HeaderCell>
        <HeaderCell $w={1} $line />
        <HeaderCell $w={45}>
          <Ico size={13} color="#1a1c21">
            <circle cx="8" cy="8" r="7" />
            <path d="M5.8 6.2c0-1.400 1-2.200 2.200-2.200s2.200.8 2.200 2c0 1.800-2.200 1.800-2.200 3.600M8 11.200v1" />
          </Ico>
        </HeaderCell>
      </HeaderRight>
    </Header>

    <Query>
      <QueryRow>
        <Field>
          <Prepend $w={54}>
            <SaveIcon />
            <ChevronDown color={BLUE} size={15} />
          </Prepend>
          <SearchText>Search</SearchText>
          <Dql>DQL</Dql>
        </Field>
        <Field $w={472}>
          <Prepend $w={53}>
            <Ico size={17} color={BLUE}>
              <path d="M1.5 2.5h13v12h-13zM1.5 6h13M4.5 1v3M11.5 1v3" />
              <path d="M4 8.5h2M7 8.5h2M10 8.5h2M4 10.5h2M7 10.5h2M10 10.5h2M4 12.5h2M7 12.5h2M10 12.5h2" />
            </Ico>
            <ChevronDown color={BLUE} size={11} />
          </Prepend>
          <DateText>This week<em>Show dates</em></DateText>
        </Field>
        <RefreshButton>
          <Ico size={15} color="#fff">
            <path d="M9.5 2.2A6 6 0 1 0 14 8M9.5 2.2l3-1.2M9.5 2.2l1.5 2.8" />
          </Ico>
          Refresh
        </RefreshButton>
      </QueryRow>
      <FilterRow>
        <Ico size={16} color={BLUE}>
          <circle cx="8" cy="8" r="7.5" />
          <path d="M3.5 5.5h9M5.5 8h5M7 10.5h2" />
        </Ico>
        <Dash />
        + Add filter
      </FilterRow>
    </Query>

    <Content>
      <MapColumn>
        <MapFrame>
          <MapSvg viewBox="8 148 1316 775" preserveAspectRatio="none">
            <defs>
              <g id="world">
                <path d={LAND_PATH} fill="#f2efe9" />
                <path d={WATER_PATH} fill="#aad3df" />
                <path d={CHAIN_PATH} fill="none" stroke="#d5e5e6" strokeWidth="0.6" strokeDasharray="2 3" />
                <path d={BORDER_PATH} fill="none" stroke="#d3bed0" strokeWidth="0.7" strokeLinejoin="round" />
              </g>
            </defs>
            <use href="#world" x="-1024" />
            <use href="#world" />
            <use href="#world" x="1024" />
            <path d={ANTARCTIC_PATH} fill="#f2efe9" />
            <text x="470" y="208" fill="#6f93c4" fontFamily="Noto Sans, sans-serif" fontStyle="italic" fontSize="10" textAnchor="middle">Baffin</text>
            <text x="470" y="220" fill="#6f93c4" fontFamily="Noto Sans, sans-serif" fontStyle="italic" fontSize="10" textAnchor="middle">Bay</text>
            {MARKERS.map((m) => (
              <circle key={`${m.x}-${m.y}`} cx={m.x} cy={m.y} r={m.r} fill={m.fill} stroke={m.line} strokeWidth="1.5" fillOpacity="0.92" />
            ))}
          </MapSvg>
          <Controls>
            <ControlGroup>
              <ControlButton>
                <svg width="16" height="16" viewBox="0 0 16 16">
                  <circle cx="8" cy="8" r="8" fill="#343741" />
                  <path d="M8 3.5v9M3.5 8h9" stroke="#fff" strokeWidth="1.2" />
                </svg>
              </ControlButton>
              <ControlButton>
                <svg width="16" height="16" viewBox="0 0 16 16">
                  <circle cx="8" cy="8" r="8" fill="#343741" />
                  <path d="M3.5 8h9" stroke="#fff" strokeWidth="1.4" />
                </svg>
              </ControlButton>
            </ControlGroup>
            <ControlGroup>
              <ControlButton>
                <svg width="14" height="14" viewBox="0 0 14 14" fill="none" stroke="#333" strokeWidth="1.5">
                  <path d="M3 0v11h11M0 3h11v11M12.5 1.5l-11 11" />
                </svg>
              </ControlButton>
            </ControlGroup>
            <ControlGroup>
              <ControlButton>
                <svg width="13" height="13" viewBox="0 0 14 14" fill="#444">
                  <polygon points="6,0.5 13.5,3.5 12,13 2.5,13 0.5,5" />
                </svg>
              </ControlButton>
              <ControlButton>
                <svg width="10" height="10" viewBox="0 0 10 10" fill="#444">
                  <rect width="10" height="10" />
                </svg>
              </ControlButton>
            </ControlGroup>
          </Controls>
          <Legend>
            <LegendTitle>Count</LegendTitle>
            {RANGES.map((r) => (
              <LegendRow key={r.label}>
                <LegendDot $color={r.color} />
                {r.label}
              </LegendRow>
            ))}
          </Legend>
          <Attribution>Map data © OpenStreetMap contributors</Attribution>
        </MapFrame>
      </MapColumn>

      <Panel>
        <Handle />
        <PanelTitle>
          wazuh-alerts-*
          <Ico size={16} color={TEXT}>
            <path d="M1 3.5h10M1 8h13M1 12.5h10M11.5 5l3 3-3 3" />
          </Ico>
        </PanelTitle>
        <Tabs>
          <Tab $active>Data</Tab>
          <Tab>Options</Tab>
        </Tabs>
        <PanelBody>
          <Card>
            <CardTitle>Metrics</CardTitle>
            <Group>
              <GroupHead>
                <ChevronRight />
                <div><b>Value</b> <span>Count</span></div>
              </GroupHead>
            </Group>
          </Card>
          <Card>
            <CardTitle>Buckets</CardTitle>
            <Group>
              <GroupHead>
                <ChevronDown color="#1a1c21" size={16} />
                Geo coordinates
              </GroupHead>
              <Form>
                <LabelRow>
                  Aggregation
                  <a>
                    Geohash help
                    <Ico size={12} color={BLUE}>
                      <path d="M8 2.5H1.5v12h12V8M9.5 1.5h5v5M14.5 1.5l-8 8" />
                    </Ico>
                  </a>
                </LabelRow>
                <Select $mb={16}>Geohash<ChevronDown /></Select>
                <LabelRow>Field</LabelRow>
                <Select $mb={17}>GeoLocation.location<ChevronDown /></Select>
                <SwitchRow><Switch />Change precision on map zoom</SwitchRow>
                <SwitchRow><Switch />Place markers off grid (use geocentroid)</SwitchRow>
                <SwitchRow $mb={16}><Switch />Only request data around map extent</SwitchRow>
                <LabelRow $mb={3}>Custom label</LabelRow>
                <Select />
              </Form>
              <GroupHead $big>
                <ChevronRight />
                Advanced
              </GroupHead>
            </Group>
          </Card>
        </PanelBody>
        <Footer>
          <Discard>
            <Ico size={16} color="#c2c3c6"><path d="M2 2l12 12M14 2 2 14" /></Ico>
            Discard
          </Discard>
          <UpdateButton>
            <Ico size={16} color="#98a2b3"><path d="M3.5 1.5v13l10-6.5z" /></Ico>
            Update
          </UpdateButton>
        </Footer>
      </Panel>
    </Content>
  </Page>
);

export default App;
